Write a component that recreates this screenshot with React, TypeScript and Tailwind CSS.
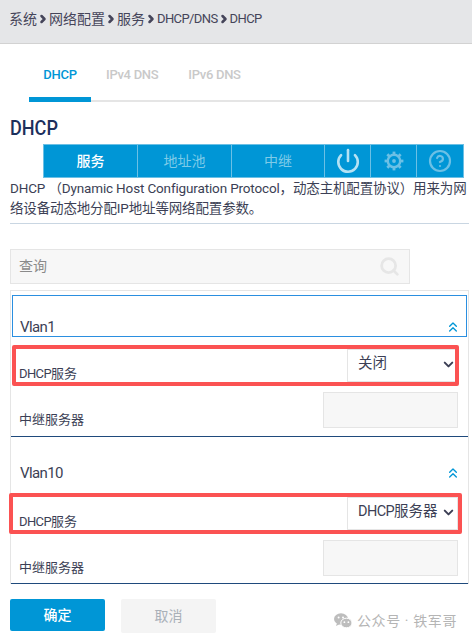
import { ChevronRight, ChevronsUp, Power, CircleHelp, Search, ChevronDown } from "lucide-react";

const font = "font-['Roboto','Noto_Sans_CJK_SC',sans-serif]";

const crumbs = [
  { label: "系统" },
  { label: "网络配置" },
  { label: "服务" },
  { label: "DHCP/DNS", latin: true },
  { label: "DHCP", latin: true },
];

function Gear() {
  const teeth = [0, 45, 90, 135, 180, 225, 270, 315];
  return (
    <svg width="20" height="20" viewBox="0 0 20 20" fill="none" className="text-[#6cc0e5]">
      {teeth.map((a) => (
        <rect key={a} x="8.6" y="0.6" width="2.8" height="3.4" fill="currentColor" transform={`rotate(${a} 10 10)`} />
      ))}
      <circle cx="10" cy="10" r="6.2" stroke="currentColor" strokeWidth="2.4" />
      <circle cx="10" cy="10" r="1.9" fill="currentColor" />
    </svg>
  );
}

function WeChat() {
  return (
    <svg width="18" height="16" viewBox="0 0 18 16" className="text-[#bdbdbd]" fill="currentColor">
      <ellipse cx="7" cy="6" rx="7" ry="5.8" />
      <path d="M3 10l-1 3 4-2z" />
      <ellipse cx="12.4" cy="10" rx="5.6" ry="4.8" stroke="#fff" strokeWidth="1" />
      <circle cx="4.6" cy="4.6" r="1" fill="#fff" />
      <circle cx="9" cy="4.6" r="1" fill="#fff" />
      <circle cx="10.4" cy="9.2" r="0.9" fill="#fff" />
      <circle cx="14.4" cy="9.2" r="0.9" fill="#fff" />
    </svg>
  );
}

function VlanBlock({ name, value, focused }: { name: string; value: string; focused?: boolean }) {
  return (
    <div className="border-b border-[#1f4a7c]">
      <div
        className={`mx-px flex h-[42px] items-end justify-between border pl-[7px] pr-[5px] ${
          focused ? "border-[#2b8fe0] pb-[1px]" : "border-transparent pb-[3px]"
        }`}
      >
        <span className="text-[15px] leading-4 tracking-[-0.6px] text-[#3c3f55]">{name}</span>
        <ChevronsUp size={16} strokeWidth={2} className="text-[#0096d6]" />
      </div>
      <div className="mt-[11px] flex h-[34px] items-end justify-between pl-2 pr-[10px]">
        <span className="text-[13px] leading-4 text-[#3c3f55]">
          <span className="tracking-[-0.6px]">DHCP</span>服务
        </span>
        <div className="flex h-[33px] w-[111px] items-center justify-between border border-[#e5e5e5] pb-[3px] pl-[10px] pr-[1px]">
          <span className="whitespace-nowrap text-[14.5px] text-[#3c3f55]">
            {value === "关闭" ? (
              value
            ) : (
              <>
                <span className="tracking-[-0.6px]">DHCP</span>服务器
              </>
            )}
          </span>
          <ChevronDown size={15} strokeWidth={3.2} className="shrink-0 text-[#3c3f55]" />
        </div>
      </div>
      <div className="mt-[10px] flex h-[36px] items-end justify-between pl-2 pr-[10px]">
        <span className="text-[13px] leading-4 text-[#3c3f55]">中继服务器</span>
        <div className="h-[36px] w-[135px] border border-[#e5e5e5] bg-[#f7f7f7]" />
      </div>
      <div className={focused ? "h-[8px]" : "h-[7px]"} />
    </div>
  );
}

export default function App() {
  return (
    <div className={`${font} relative h-[639px] w-[472px] overflow-hidden bg-white`}>
      {/* Breadcrumb */}
      <header className="flex h-[44px] items-center border-b border-[#d2d2d2] bg-[#e5e6e8] pb-[5px] pl-[9px] text-[14px] text-[#45455a]">
        {crumbs.map((c, i) => (
          <span key={i} className="flex items-center">
            {i > 0 && <ChevronRight size={12} strokeWidth={5} className="text-[#45455a]" />}
            <span className={c.latin ? "text-[13px] tracking-[-0.6px]" : ""}>{c.label}</span>
          </span>
        ))}
      </header>

      {/* Tabs */}
      <nav className="ml-[29px] flex h-[58px] w-[421px] items-start border-b-2 border-[#e5e5e5] text-[13px] font-medium tracking-[-0.3px]">
        <div className="flex h-[58px] w-[62px] shrink-0 justify-center border-b-[5px] border-[#0096d6] pt-[21px] text-[#0096d6]">
          DHCP
        </div>
        <div className="ml-[15px] pt-[21px] text-[#c9c9c9]">IPv4 DNS</div>
        <div className="ml-[30px] pt-[21px] text-[#c9c9c9]">IPv6 DNS</div>
      </nav>

      {/* Title */}
      <h1 className="mb-[2px] ml-[10px] mt-[12px] origin-left scale-x-[0.86] text-[21px] font-medium leading-[28px] text-[#1c2f5c]">
        DHCP
      </h1>

      {/* Toolbar */}
      <div className="ml-[43px] flex h-[34px] w-[421px] border border-[#6cc0e5] bg-[#0096d6] text-[14px]">
        <div className="flex w-[94px] items-center justify-center border-r border-[#6cc0e5] font-medium text-white">服务</div>
        <div className="flex w-[94px] items-center justify-center border-r border-[#6cc0e5] text-[#7fcbe8]">地址池</div>
        <div className="flex w-[93px] items-center justify-center border-r border-[#6cc0e5] text-[#7fcbe8]">中继</div>
        <div className="flex w-[46px] items-center justify-center border-r border-[#6cc0e5]">
          <Power size={26} strokeWidth={2.4} className="text-[#b5e2f4]" />
        </div>
        <div className="flex w-[46px] items-center justify-center border-r border-[#6cc0e5]">
          <Gear />
        </div>
        <div className="flex flex-1 items-center justify-center">
          <CircleHelp size={24} strokeWidth={2.2} className="text-[#6cc0e5]" />
        </div>
      </div>

      {/* Description */}
      <p className="ml-[10px] w-[459px] border-b border-[#c9d6e2] pb-[5px] text-[13.5px] leading-[20px] tracking-[-0.15px] text-[#3c3f55]">
        DHCP （Dynamic Host Configuration Protocol，动态主机配置协议）用来为网络设备动态地分配IP地址等网络配置参数。
      </p>

      {/* Search */}
      <div className="ml-[10px] mt-[25px] flex h-[35px] w-[400px] items-center justify-between border border-[#e5e5e5] bg-[#f7f7f7] pl-2 pr-[9px]">
        <span className="text-[14px] text-[#8a8a8a]">查询</span>
        <Search size={21} strokeWidth={3.2} className="text-[#e6e6e6]" />
      </div>

      {/* Vlan list */}
      <div className="ml-[10px] mt-[6px] w-[459px] border-x border-t border-[#e5e5e5] pt-1">
        <VlanBlock name="Vlan1" value="关闭" focused />
        <div className="h-[6px]" />
        <VlanBlock name="Vlan10" value="DHCP服务器" />
      </div>

      {/* Annotation boxes */}
      <div className="absolute left-[12px] top-[345px] h-[41px] w-[447px] rounded-[2px] border-[4px] border-[#fb5252]" />
      <div className="absolute left-[9px] top-[493px] h-[41px] w-[453px] rounded-[2px] border-[4px] border-[#fb5252]" />

      {/* Buttons */}
      <div className="ml-[10px] mt-[15px] flex items-start gap-4 text-[14px]">
        <button className="h-[32px] w-[95px] rounded-[2px] bg-[#0096d6] font-medium text-white">确定</button>
        <button className="h-[34px] w-[95px] rounded-[2px] bg-[#f4f4f4] text-[#a9b0b8]">取消</button>
      </div>

      {/* Watermark */}
      <div className="absolute left-[334px] top-[613px] flex items-center gap-[5px] text-[14px] leading-4 tracking-[0.6px] text-[#b5b5b5]">
        <WeChat />
        <span>公众号 · 铁军哥</span>
      </div>
    </div>
  );
}
